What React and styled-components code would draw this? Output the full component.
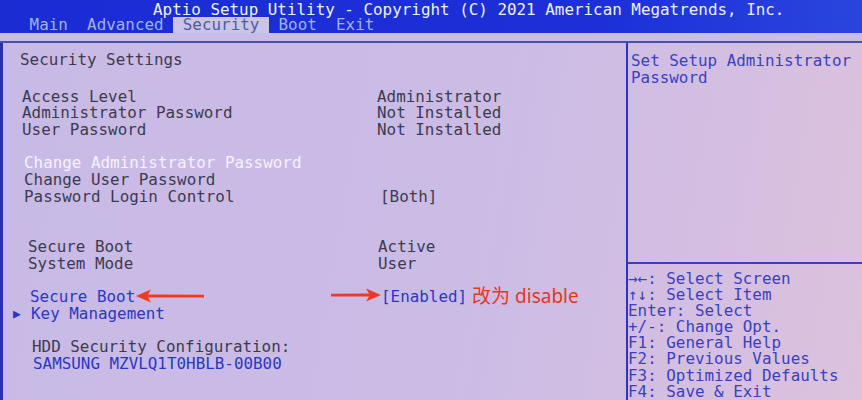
import React from 'react'
import styled, { createGlobalStyle } from 'styled-components'

const GlobalStyle = createGlobalStyle`
  html, body {
    margin: 0;
    padding: 0;
    background: #c9bce6;
    overflow: hidden;
  }
  * {
    box-sizing: border-box;
  }
`

const Screen = styled.div`
  width: 862px;
  height: 400px;
  display: flex;
  flex-direction: column;
  font-family: "DejaVu Sans Mono", "Liberation Mono", monospace;
  font-size: 15.9px;
  background: linear-gradient(100deg, #c8bae6 0%, #cbbce6 55%, #d6bfe0 85%, #dcc2dc 100%);
  overflow: hidden;
`

const TopBar = styled.div`
  flex-shrink: 0;
  height: 33px;
  background: linear-gradient(90deg, #1a2cd2 0%, #1d30d8 70%, #2a45de 100%);
  display: flex;
  flex-direction: column;
`

const Title = styled.div`
  height: 17px;
  padding-top: 2px;
  line-height: 15px;
  padding-left: 153px;
  color: #eef0ff;
  white-space: pre;
`

const Tabs = styled.div`
  display: flex;
  height: 16px;
  margin-left: 20px;
`

const Tab = styled.div`
  padding: 0 9.6px;
  line-height: 16px;
  white-space: pre;
  color: ${p => (p.$active ? '#4f5c9e' : '#9fb1ea')};
  background: ${p => (p.$active ? '#cbc3ea' : 'transparent')};
`

const Strip = styled.div`
  flex-shrink: 0;
  height: 10px;
  background: #c6bde8;
  border-bottom: 2px solid #4a4cb8;
`

const Body = styled.div`
  flex: 1;
  min-height: 0;
  display: flex;
`

const Main = styled.div`
  width: 626px;
  border-left: 3px solid #2a30b0;
  padding-top: 9px;
  display: flex;
  flex-direction: column;
`

const Heading = styled.div`
  padding-left: 17px;
  line-height: 16.7px;
  color: #3d3a4f;
  margin-bottom: 18px;
`

const Row = styled.div`
  display: grid;
  grid-template-columns: 18px ${p => p.$col}px auto;
  align-items: center;
  height: 16.7px;
  padding-left: ${p => p.$shift}px;
  white-space: pre;
`

const Marker = styled.span`
  color: #2b37c2;
  font-size: 13px;
`

const Label = styled.span`
  display: flex;
  align-items: center;
  color: ${p => p.$tone === 'white' ? '#f6f2ff' : p.$tone === 'blue' ? '#2b37c2' : '#3d3a4f'};
`

const Value = styled.span`
  position: relative;
  display: flex;
  align-items: center;
  color: ${p => (p.$tone === 'blue' ? '#2b37c2' : '#3d3a4f')};
`

const LeftArrow = styled.span`
  display: flex;
  margin-left: 1px;
`

const RightArrow = styled.span`
  display: flex;
  position: absolute;
  right: 100%;
  top: 1px;
`

const Note = styled.span`
  margin-left: 5px;
  font-family: "Noto Sans", "Noto Sans CJK SC", sans-serif;
  font-size: 19px;
  color: #e8351f;
  line-height: 16px;
`

const Side = styled.div`
  flex: 1;
  border-left: 2px solid #2e33c4;
  display: flex;
  flex-direction: column;
  color: #3a3fc0;
`

const HelpText = styled.div`
  flex-shrink: 0;
  height: 221px;
  border-bottom: 2px solid #3a3fc4;
  padding: 9px 0 0 3px;
  line-height: 17px;
`

const Keys = styled.div`
  padding: 7px 0 0 0;
  line-height: 16.1px;
  white-space: pre;
`

const Key = styled.div``

const rows = [
  { shift: 1, col: 355, label: 'Access Level', value: 'Administrator' },
  { shift: 1, col: 355, label: 'Administrator Password', value: 'Not Installed' },
  { shift: 1, col: 355, label: 'User Password', value: 'Not Installed' },
  { shift: 1, col: 355 },
  { shift: 3, col: 355, label: 'Change Administrator Password', tone: 'white' },
  { shift: 3, col: 355, label: 'Change User Password' },
  { shift: 3, col: 356, label: 'Password Login Control', value: '[Both]' },
  { shift: 4, col: 352 },
  { shift: 5, col: 352 },
  { shift: 7, col: 350, label: 'Secure Boot', value: 'Active' },
  { shift: 7, col: 350, label: 'System Mode', value: 'User' },
  { shift: 8, col: 350 },
  { shift: 9, col: 351, label: 'Secure Boot', tone: 'blue', value: '[Enabled]', valueTone: 'blue', arrows: true, note: '改为 disable' },
  { shift: 10, col: 350, marker: true, label: 'Key Management', tone: 'blue' },
  { shift: 10, col: 350 },
  { shift: 11, col: 350, label: 'HDD Security Configuration:' },
  { shift: 12, col: 350, label: 'SAMSUNG MZVLQ1T0HBLB-00B00', tone: 'blue' },
]

const keys = [
  '→←: Select Screen',
  '↑↓: Select Item',
  'Enter: Select',
  '+/-: Change Opt.',
  'F1: General Help',
  'F2: Previous Values',
  'F3: Optimized Defaults',
  'F4: Save & Exit',
]

const RedArrow = ({ width, flip }) => (
  <svg width={width} height="14" viewBox={`0 0 ${width} 14`}>
    <g transform={flip ? `translate(${width} 0) scale(-1 1)` : undefined}>
      <polygon points={`0,7 15,0.5 12,5.4 ${width},5.8 ${width},8.4 12,8.6 15,13.5`} fill="#ec3b22" />
    </g>
  </svg>
)

export default function App() {
  return (
    <>
      <GlobalStyle />
      <Screen>
        <TopBar>
          <Title>Aptio Setup Utility - Copyright (C) 2021 American Megatrends, Inc.</Title>
          <Tabs>
            <Tab>Main</Tab>
            <Tab>Advanced</Tab>
            <Tab $active>Security</Tab>
            <Tab>Boot</Tab>
            <Tab>Exit</Tab>
          </Tabs>
        </TopBar>
        <Strip />
        <Body>
          <Main>
            <Heading>Security Settings</Heading>
            {rows.map((r, i) => (
              <Row key={i} $shift={r.shift} $col={r.col}>
                <Marker>{r.marker ? '▶' : ''}</Marker>
                <Label $tone={r.tone}>
                  {r.label}
                  {r.arrows && (
                    <LeftArrow>
                      <RedArrow width={68} />
                    </LeftArrow>
                  )}
                </Label>
                <Value $tone={r.valueTone}>
                  {r.arrows && (
                    <RightArrow>
                      <RedArrow width={50} flip />
                    </RightArrow>
                  )}
                  {r.value}
                  {r.note && <Note>{r.note}</Note>}
                </Value>
              </Row>
            ))}
          </Main>
          <Side>
            <HelpText>
              Set Setup Administrator
              <br />
              Password
            </HelpText>
            <Keys>
              {keys.map(k => (
                <Key key={k}>{k}</Key>
              ))}
            </Keys>
          </Side>
        </Body>
      </Screen>
    </>
  )
}
